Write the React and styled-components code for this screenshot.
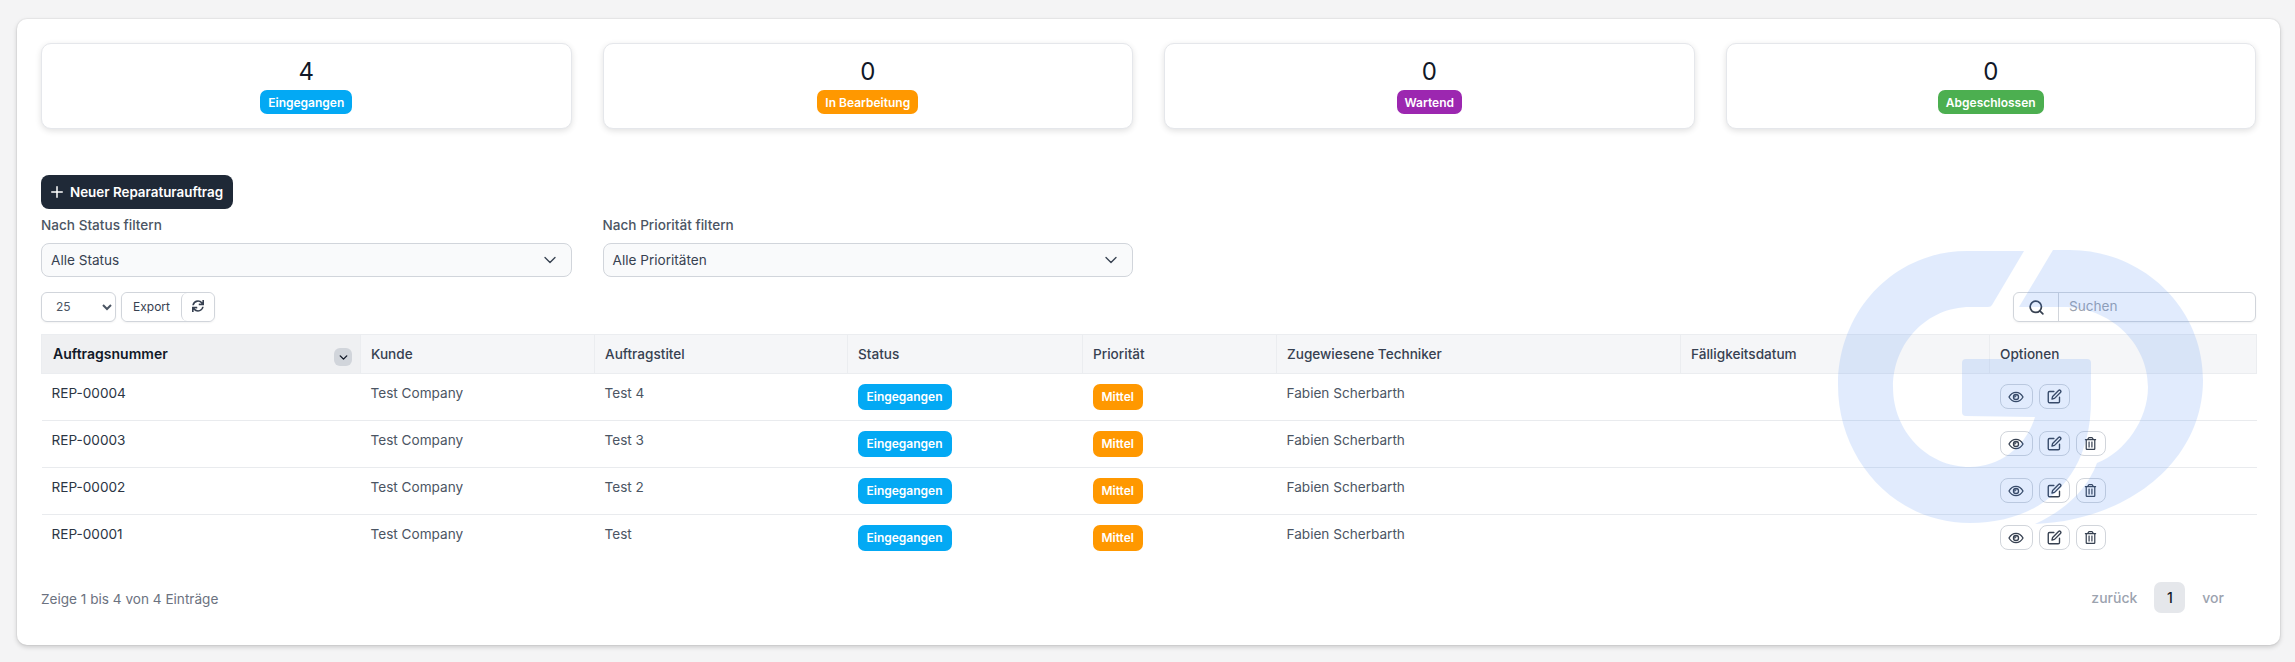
import React from "react";
import styled, { createGlobalStyle } from "styled-components";
import { FiChevronDown, FiSearch, FiEdit, FiPlus } from "react-icons/fi";
import { FaSync, FaRegTrashAlt } from "react-icons/fa";

const Global = createGlobalStyle`
  html, body { margin: 0; padding: 0; background: #f4f4f5; }
  body { font-family: Inter, "Liberation Sans", sans-serif; color: #374151; }
  * { box-sizing: border-box; }
`;
const Page = styled.div`
  width: 2295px; height: 662px; padding: 19px 15px 17px 17px; overflow: hidden;
`;
const Card = styled.main`
  position: relative; height: 626px; background: #fff; border-radius: 10px; padding: 24px;
  box-shadow: 0 0 0 1px rgba(0,0,0,.03), 0 2px 5px rgba(0,0,0,.18);
`;
const Grid = styled.div`
  display: grid; grid-template-columns: repeat(4, 1fr); column-gap: 31px;
`;
const Stat = styled.div`
  height: 86px; display: flex; flex-direction: column; align-items: center; padding-top: 13px;
  background: #fff; border: 1px solid #e5e7eb; border-radius: 10px;
  box-shadow: 0 2px 6px rgba(0,0,0,.12);
`;
const StatNum = styled.div`font-size: 24px; line-height: 30px; color: #111827; margin-bottom: 3px;`;
const Badge = styled.span`
  display: inline-flex; align-items: center; height: ${p => p.$h}px; padding: 0 ${p => p.$px}px; border-radius: 7px;
  background: ${p => p.$bg}; color: #fff; font-size: 12px; font-weight: 600; white-space: nowrap;
`;
const Primary = styled.button`
  display: flex; align-items: center; gap: 4px; height: 34px; width: 192px; margin-top: 46px; padding: 0 0 0 7px;
  background: #1f2937; border: 0; border-radius: 8px; color: #fff;
  font: 600 13.4px Inter, sans-serif; white-space: nowrap;
`;
const Filters = styled(Grid)`margin-top: 6px;`;
const Label = styled.label`
  display: block; font-size: 13.6px; line-height: 20px; font-weight: 500; color: #4b5563; margin-bottom: 8px;
`;
const Trigger = styled.div`
  display: flex; align-items: center; justify-content: space-between; height: 34px; padding: 0 11px 0 9px;
  background: #f9fafb; border: 1px solid #d1d5db; border-radius: 8px; font-size: 13.6px; color: #374151;
`;
const Toolbar = styled.div`
  display: flex; align-items: center; justify-content: space-between; margin-top: 15px;
`;
const ToolLeft = styled.div`display: flex; gap: 5px;`;
const Length = styled.select`
  width: 75px; height: 30px; padding: 0 0 2px 10px; background: #fff; border: 1px solid #d1d5db; border-radius: 6px;
  font: 400 12px Inter, sans-serif; color: #4b5563;
  box-shadow: 0 1px 2px rgba(0,0,0,.05);
`;
const BtnGroup = styled.div`
  display: flex; height: 30px; border: 1px solid #d1d5db; border-radius: 6px; box-shadow: 0 1px 2px rgba(0,0,0,.05);
`;
const GroupBtn = styled.button`
  display: flex; align-items: center; justify-content: center; width: ${p => p.$w}px; background: #fff; border: 0;
  border-left: ${p => p.$sep ? "1px solid #d1d5db" : "0"}; border-radius: 6px; padding: 0 0 2px;
  font: 400 12px Inter, sans-serif; color: #374151;
  svg { width: 12px; height: 12px; }
`;
const Search = styled.div`
  display: flex; width: 243px; height: 30px; border: 1px solid #d1d5db; border-radius: 6px; box-shadow: 0 1px 2px rgba(0,0,0,.05);
`;
const SearchIcon = styled.div`
  display: flex; align-items: center; justify-content: center; width: 45px; border-right: 1px solid #d1d5db; color: #374151;
`;
const SearchInput = styled.div`
  display: flex; align-items: center; padding: 0 0 2px 10px; font-size: 13.6px; color: #9ca3af;
`;
const Table = styled.table`
  width: 2215px; margin-top: 12px; table-layout: fixed; border-collapse: collapse;
`;
const Th = styled.th`
  position: relative; height: 39px; padding: 0 10px 1px; text-align: left;
  font-size: ${p => p.$sorted ? 14 : 13.6}px; font-weight: ${p => p.$sorted ? 600 : 450};
  color: ${p => p.$sorted ? "#111827" : "#374151"}; background: ${p => p.$sorted ? "#eff0f2" : "#f5f6f8"};
  border: 1px solid #ebedf0; padding-left: ${p => p.$sorted ? 11 : 10}px;
`;
const SortBtn = styled.span`
  position: absolute; right: 8px; top: 13px; width: 18px; height: 18px; display: flex; align-items: center; justify-content: center;
  background: #d1d5db; border-radius: 6px; color: #111827;
`;
const Tr = styled.tr`
  height: 47px; border-bottom: ${p => p.$last ? 0 : "1px solid #e9ebee"};
`;
const Td = styled.td`
  padding: 10px 10px 0; vertical-align: top; font-size: 13.6px; line-height: 18px; color: ${p => p.$strong ? "#2b3544" : "#4b5563"};
`;
const Actions = styled.div`display: flex; gap: 6px;`;
const IconBtn = styled.button`
  display: flex; align-items: center; justify-content: center; width: ${p => p.$w}px; height: 25px; padding: 0;
  background: #fff; border: 1px solid #d1d5db; border-radius: 8px; color: #374151;
`;
const Footer = styled.div`
  display: flex; align-items: flex-start; justify-content: space-between; margin-top: 20px;
`;
const Info = styled.div`font-size: 13.6px; line-height: 20px; color: #6b7280; margin-top: 7px;`;
const Pager = styled.div`display: flex; align-items: center; gap: 17px; padding-right: 32px; height: 31px;`;
const PageLink = styled.span`font-size: 14px; font-weight: 500; color: #9ca3af;`;
const PageCurrent = styled.span`
  display: flex; align-items: center; justify-content: center; width: 31px; height: 31px; border-radius: 7px;
  background: #e5e7eb; font-size: 14px; font-weight: 500; color: #111827;
`;
const Watermark = styled.svg`
  position: absolute; left: 1813px; top: 226px; width: 380px; height: 285px; pointer-events: none;
  fill: rgb(59, 130, 246); opacity: .15;
`;

const Eye = () => (
  <svg width="16" height="16" viewBox="0 0 24 24" fill="none" stroke="currentColor" strokeWidth="2" strokeLinecap="round" strokeLinejoin="round">
    <path d="M1.5 12S5.5 5 12 5s10.5 7 10.5 7-4 7-10.5 7S1.5 12 1.5 12z" />
    <circle cx="12" cy="12" r="3.8" />
    <path d="M12 10.2a1.8 1.8 0 0 0-1.8 1.8" />
  </svg>
);

const stats = [
  ["4", "Eingegangen", "#03a9f4"],
  ["0", "In Bearbeitung", "#ff9800"],
  ["0", "Wartend", "#9c27b0"],
  ["0", "Abgeschlossen", "#4caf50"],
];
const rows = [
  ["REP-00004", "Test 4", false],
  ["REP-00003", "Test 3", true],
  ["REP-00002", "Test 2", true],
  ["REP-00001", "Test", true],
];
const cols = [319, 234, 253, 235, 194, 404, 309, 267];
const heads = ["Kunde", "Auftragstitel", "Status", "Priorität", "Zugewiesene Techniker", "Fälligkeitsdatum", "Optionen"];

export default function App() {
  return (
    <Page>
      <Global />
      <Card>
        <Grid>
          {stats.map(([n, l, c]) => (
            <Stat key={l}>
              <StatNum>{n}</StatNum>
              <Badge $bg={c} $h={24} $px={8}>{l}</Badge>
            </Stat>
          ))}
        </Grid>
        <Primary><FiPlus size={18} />Neuer Reparaturauftrag</Primary>
        <Filters>
          <div>
            <Label>Nach Status filtern</Label>
            <Trigger>Alle Status<FiChevronDown size={20} strokeWidth={1.6} /></Trigger>
          </div>
          <div>
            <Label>Nach Priorität filtern</Label>
            <Trigger>Alle Prioritäten<FiChevronDown size={20} strokeWidth={1.6} /></Trigger>
          </div>
        </Filters>
        <Toolbar>
          <ToolLeft>
            <Length defaultValue="25"><option>25</option><option>50</option></Length>
            <BtnGroup>
              <GroupBtn $w={59}>Export</GroupBtn>
              <GroupBtn $w={33} $sep><FaSync /></GroupBtn>
            </BtnGroup>
          </ToolLeft>
          <Search>
            <SearchIcon><FiSearch size={17} strokeWidth={2.4} /></SearchIcon>
            <SearchInput>Suchen</SearchInput>
          </Search>
        </Toolbar>
        <Table>
          <colgroup>{cols.map((w, i) => <col key={i} width={w} />)}</colgroup>
          <thead>
            <tr>
              <Th $sorted>Auftragsnummer<SortBtn><FiChevronDown size={13} strokeWidth={2.6} /></SortBtn></Th>
              {heads.map(h => <Th key={h}>{h}</Th>)}
            </tr>
          </thead>
          <tbody>
            {rows.map(([id, title, del], i) => (
              <Tr key={id} $last={i === 3}>
                <Td $strong>{id}</Td>
                <Td>Test Company</Td>
                <Td>{title}</Td>
                <Td><Badge $bg="#03a9f4" $h={26} $px={9}>Eingegangen</Badge></Td>
                <Td><Badge $bg="#ff9800" $h={26} $px={9}>Mittel</Badge></Td>
                <Td>Fabien Scherbarth</Td>
                <Td></Td>
                <Td>
                  <Actions>
                    <IconBtn $w={33}><Eye /></IconBtn>
                    <IconBtn $w={31}><FiEdit size={15} strokeWidth={2.2} /></IconBtn>
                    {del && <IconBtn $w={30}><FaRegTrashAlt size={13} /></IconBtn>}
                  </Actions>
                </Td>
              </Tr>
            ))}
          </tbody>
        </Table>
        <Footer>
          <Info>Zeige 1 bis 4 von 4 Einträge</Info>
          <Pager>
            <PageLink>zurück</PageLink>
            <PageCurrent>1</PageCurrent>
            <PageLink>vor</PageLink>
          </Pager>
        </Footer>
        <Watermark viewBox="1830 245 380 285">
          <path d="M2024 251L1992 305Q1991 307 1988 307L1970 307C1927 307 1893 343 1893 387C1893 431 1927 467 1970 467C2000 467 2026 447 2035 417L1966 416Q1962 416 1962 412L1962 363Q1962 359 1966 359L2087 359Q2091 359 2091 363L2091 400C2091 480 2040 523 1970 523C1895 523 1838 460 1838 385C1838 310 1895 251 1967 251Z" />
          <path d="M2053 250L2019 307L2063 307C2110 307 2148 343 2148 387C2148 420 2125 452 2097 463C2087 490 2065 510 2035 524C2130 520 2203 460 2203 380C2203 305 2140 250 2070 250Z" />
        </Watermark>
      </Card>
    </Page>
  );
}
